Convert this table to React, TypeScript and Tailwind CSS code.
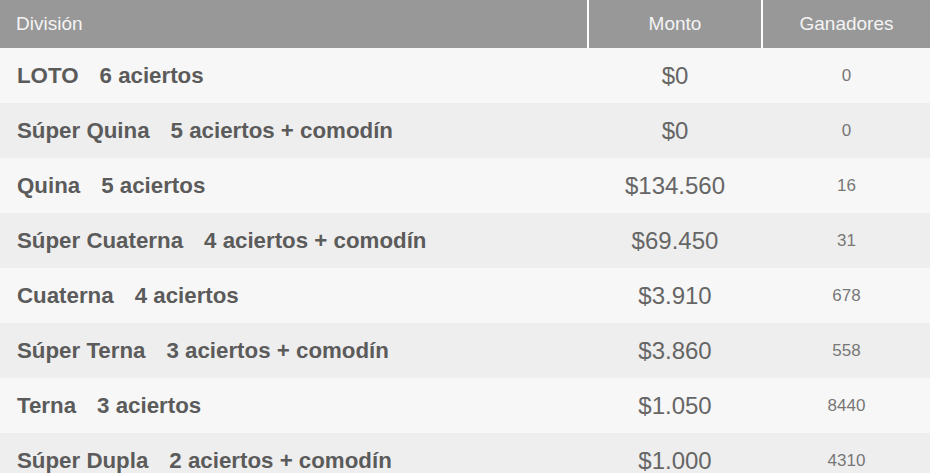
const ROWS = [
  { name: 'LOTO', hits: '6 aciertos', amount: '$0', winners: '0' },
  { name: 'Súper Quina', hits: '5 aciertos + comodín', amount: '$0', winners: '0' },
  { name: 'Quina', hits: '5 aciertos', amount: '$134.560', winners: '16' },
  { name: 'Súper Cuaterna', hits: '4 aciertos + comodín', amount: '$69.450', winners: '31' },
  { name: 'Cuaterna', hits: '4 aciertos', amount: '$3.910', winners: '678' },
  { name: 'Súper Terna', hits: '3 aciertos + comodín', amount: '$3.860', winners: '558' },
  { name: 'Terna', hits: '3 aciertos', amount: '$1.050', winners: '8440' },
  { name: 'Súper Dupla', hits: '2 aciertos + comodín', amount: '$1.000', winners: '4310' },
]

export default function App() {
  return (
    <div
      className="w-[930px] h-[473px] overflow-hidden bg-white"
      style={{ fontFamily: '"Liberation Sans", Arial, sans-serif' }}
    >
      {/* Header */}
      <div className="grid grid-cols-[587px_174px_1fr] h-[48px] bg-[#989898] text-[#f4f4f4] text-[19px]">
        <div className="flex items-center pl-[16px]">División</div>
        <div className="flex items-center justify-center border-l-2 border-white">Monto</div>
        <div className="flex items-center justify-center border-l-2 border-white">Ganadores</div>
      </div>

      {/* Rows */}
      {ROWS.map((row, i) => (
        <div
          key={row.name}
          className={`grid grid-cols-[587px_174px_1fr] h-[55px] ${
            i % 2 === 0 ? 'bg-[#f7f7f7]' : 'bg-[#eeeeee]'
          }`}
        >
          <div className="flex items-center pl-[17px] text-[22.3px] font-bold text-[#5b5b5b]">
            <span>{row.name}</span>
            <span className="ml-[21px]">{row.hits}</span>
          </div>
          <div className="flex items-center justify-center pl-[2px] text-[24px] text-[#666666]">
            {row.amount}
          </div>
          <div className="flex items-center justify-center pl-[2px] text-[17px] text-[#777777]">
            {row.winners}
          </div>
        </div>
      ))}
    </div>
  )
}
